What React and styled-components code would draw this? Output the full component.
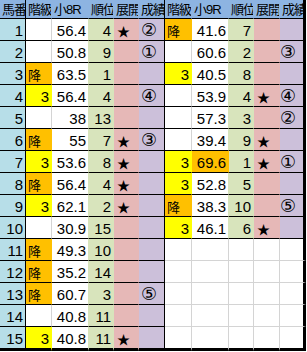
import React from 'react'
import styled, { createGlobalStyle } from 'styled-components'

const GlobalStyle = createGlobalStyle`
    body {
        margin: 0;
        background: #fff;
        font-family: 'Liberation Sans', 'Noto Sans CJK JP', sans-serif;
        color: #000;
    }
`

const ORANGE = '#ffc000'
const YELLOW = '#ffff00'
const WHITE = '#ffffff'
const GRID = '#d4d4d4'
const HEAD_BG = '#8db4e2'

const WIDTHS = [26, 26, 37, 25, 25, 26, 27, 37, 25, 26, 26]
const HEAD = ['馬番', '階級', '小8R', '順位', '展開', '成績', '階級', '小9R', '順位', '展開', '成績']

const leftRows = [
    ['', '56.4', '4', '★', '②'],
    ['', '50.8', '9', '', '①'],
    ['降', '63.5', '1', '', ''],
    ['3', '56.4', '4', '', '④'],
    ['', '38', '13', '', ''],
    ['降', '55', '7', '★', '③'],
    ['3', '53.6', '8', '★', ''],
    ['降', '56.4', '4', '★', ''],
    ['3', '62.1', '2', '★', ''],
    ['', '30.9', '15', '', ''],
    ['降', '49.3', '10', '', ''],
    ['降', '35.2', '14', '', ''],
    ['降', '60.7', '3', '', '⑤'],
    ['', '40.8', '11', '', ''],
    ['3', '40.8', '11', '★', ''],
]

const rightRows = [
    ['降', '41.6', '7', '', ''],
    ['', '60.6', '2', '', '③'],
    ['3', '40.5', '8', '', ''],
    ['', '53.9', '4', '★', '④'],
    ['', '57.3', '3', '', '②'],
    ['', '39.4', '9', '★', ''],
    ['3', '69.6', '1', '★', '①'],
    ['3', '52.8', '5', '', ''],
    ['降', '38.3', '10', '', '⑤'],
    ['3', '46.1', '6', '★', ''],
]

const Sheet = styled.div`
    display: grid;
    grid-template-columns: ${WIDTHS.map(w => `${w}px`).join(' ')};
    width: 306px;
`

const HeadCell = styled.div`
    box-sizing: border-box;
    height: 19px;
    background: ${HEAD_BG};
    border-bottom: 1px solid #000;
    border-right: ${props => props.$right};
    padding-left: 2px;
    font-size: 13px;
    line-height: 19px;
    letter-spacing: -1px;
    white-space: nowrap;
    overflow: hidden;
`

const Cell = styled.div`
    box-sizing: border-box;
    height: ${props => (props.$last ? 24 : 22)}px;
    background: ${props => props.$bg};
    border-right: ${props => props.$right};
    border-bottom: ${props => props.$bottom};
    padding: 2px 2px 0 ${props => props.$padL}px;
    text-align: ${props => props.$align};
    font-size: 15px;
    line-height: 19px;
    white-space: nowrap;
    overflow: hidden;
`

const Kanji = styled.span`
    font-family: 'Noto Sans CJK JP', sans-serif;
    font-size: 13px;
    line-height: 1;
`

const Mark = styled.span`
    font-family: 'Noto Sans CJK JP', sans-serif;
    font-size: 13px;
    line-height: 1;
`

const Circled = styled.span`
    font-family: 'DejaVu Sans', 'Noto Sans CJK JP', sans-serif;
    font-size: 18px;
    line-height: 1;
`

const gradeFill = v => (v === '降' ? ORANGE : v === '3' ? YELLOW : WHITE)

const fillFor = (col, v, filled) => {
    if (!filled) return WHITE
    switch (col) {
        case 0:
            return '#b7dee8'
        case 1:
        case 6:
            return gradeFill(v)
        case 7:
            return v === '69.6' ? ORANGE : WHITE
        case 3:
        case 8:
            return '#d8e4bc'
        case 4:
        case 9:
            return '#e6b8b7'
        case 5:
        case 10:
            return '#ccc0da'
        default:
            return WHITE
    }
}

const isResult = col => col === 5 || col === 10

const renderValue = (col, v) => {
    if (v === '降') return <Kanji>{v}</Kanji>
    if (v === '★') return <Mark>{v}</Mark>
    if (isResult(col)) return <Circled>{v}</Circled>
    return v
}

const alignFor = (col, v) => {
    if (col === 4 || col === 9 || isResult(col)) return 'left'
    if ((col === 1 || col === 6) && v === '降') return 'left'
    return 'right'
}

const App = () => {
    const rows = leftRows.map((l, i) => {
        const r = rightRows[i] || ['', '', '', '', '']
        return [String(i + 1), ...l, ...r]
    })

    return (
        <>
            <GlobalStyle />
            <Sheet>
                {HEAD.map((h, c) => (
                    <HeadCell
                        key={`h${c}`}
                        $right={c === 10 ? '3px solid #000' : c === 0 || c === 5 ? '1px solid #000' : `1px solid ${HEAD_BG}`}>
                        {h}
                    </HeadCell>
                ))}
                {rows.map((cells, i) => {
                    const fills = cells.map((v, c) => fillFor(c, v, c < 6 || i < 10))
                    const last = i === rows.length - 1
                    return cells.map((v, c) => {
                        let right
                        if (c === 10) right = '3px solid #000'
                        else if (c === 0 || c === 5) right = '1px solid #000'
                        else if (fills[c] !== WHITE) right = `1px solid ${fills[c]}`
                        else if (fills[c + 1] !== WHITE) right = `1px solid ${fills[c + 1]}`
                        else right = `1px solid ${GRID}`

                        let bottom = '1px solid #000'
                        if (last) bottom = '3px solid #000'
                        else if (i >= 10 && c >= 6) bottom = `1px solid ${GRID}`

                        return (
                            <Cell
                                key={`${i}-${c}`}
                                $bg={fills[c]}
                                $right={right}
                                $bottom={bottom}
                                $last={last}
                                $align={alignFor(c, v)}
                                $padL={c === 4 || c === 9 ? 3 : c === 5 ? 2 : c === 10 ? 0 : 2}>
                                {renderValue(c, v)}
                            </Cell>
                        )
                    })
                })}
            </Sheet>
        </>
    )
}

export default App
